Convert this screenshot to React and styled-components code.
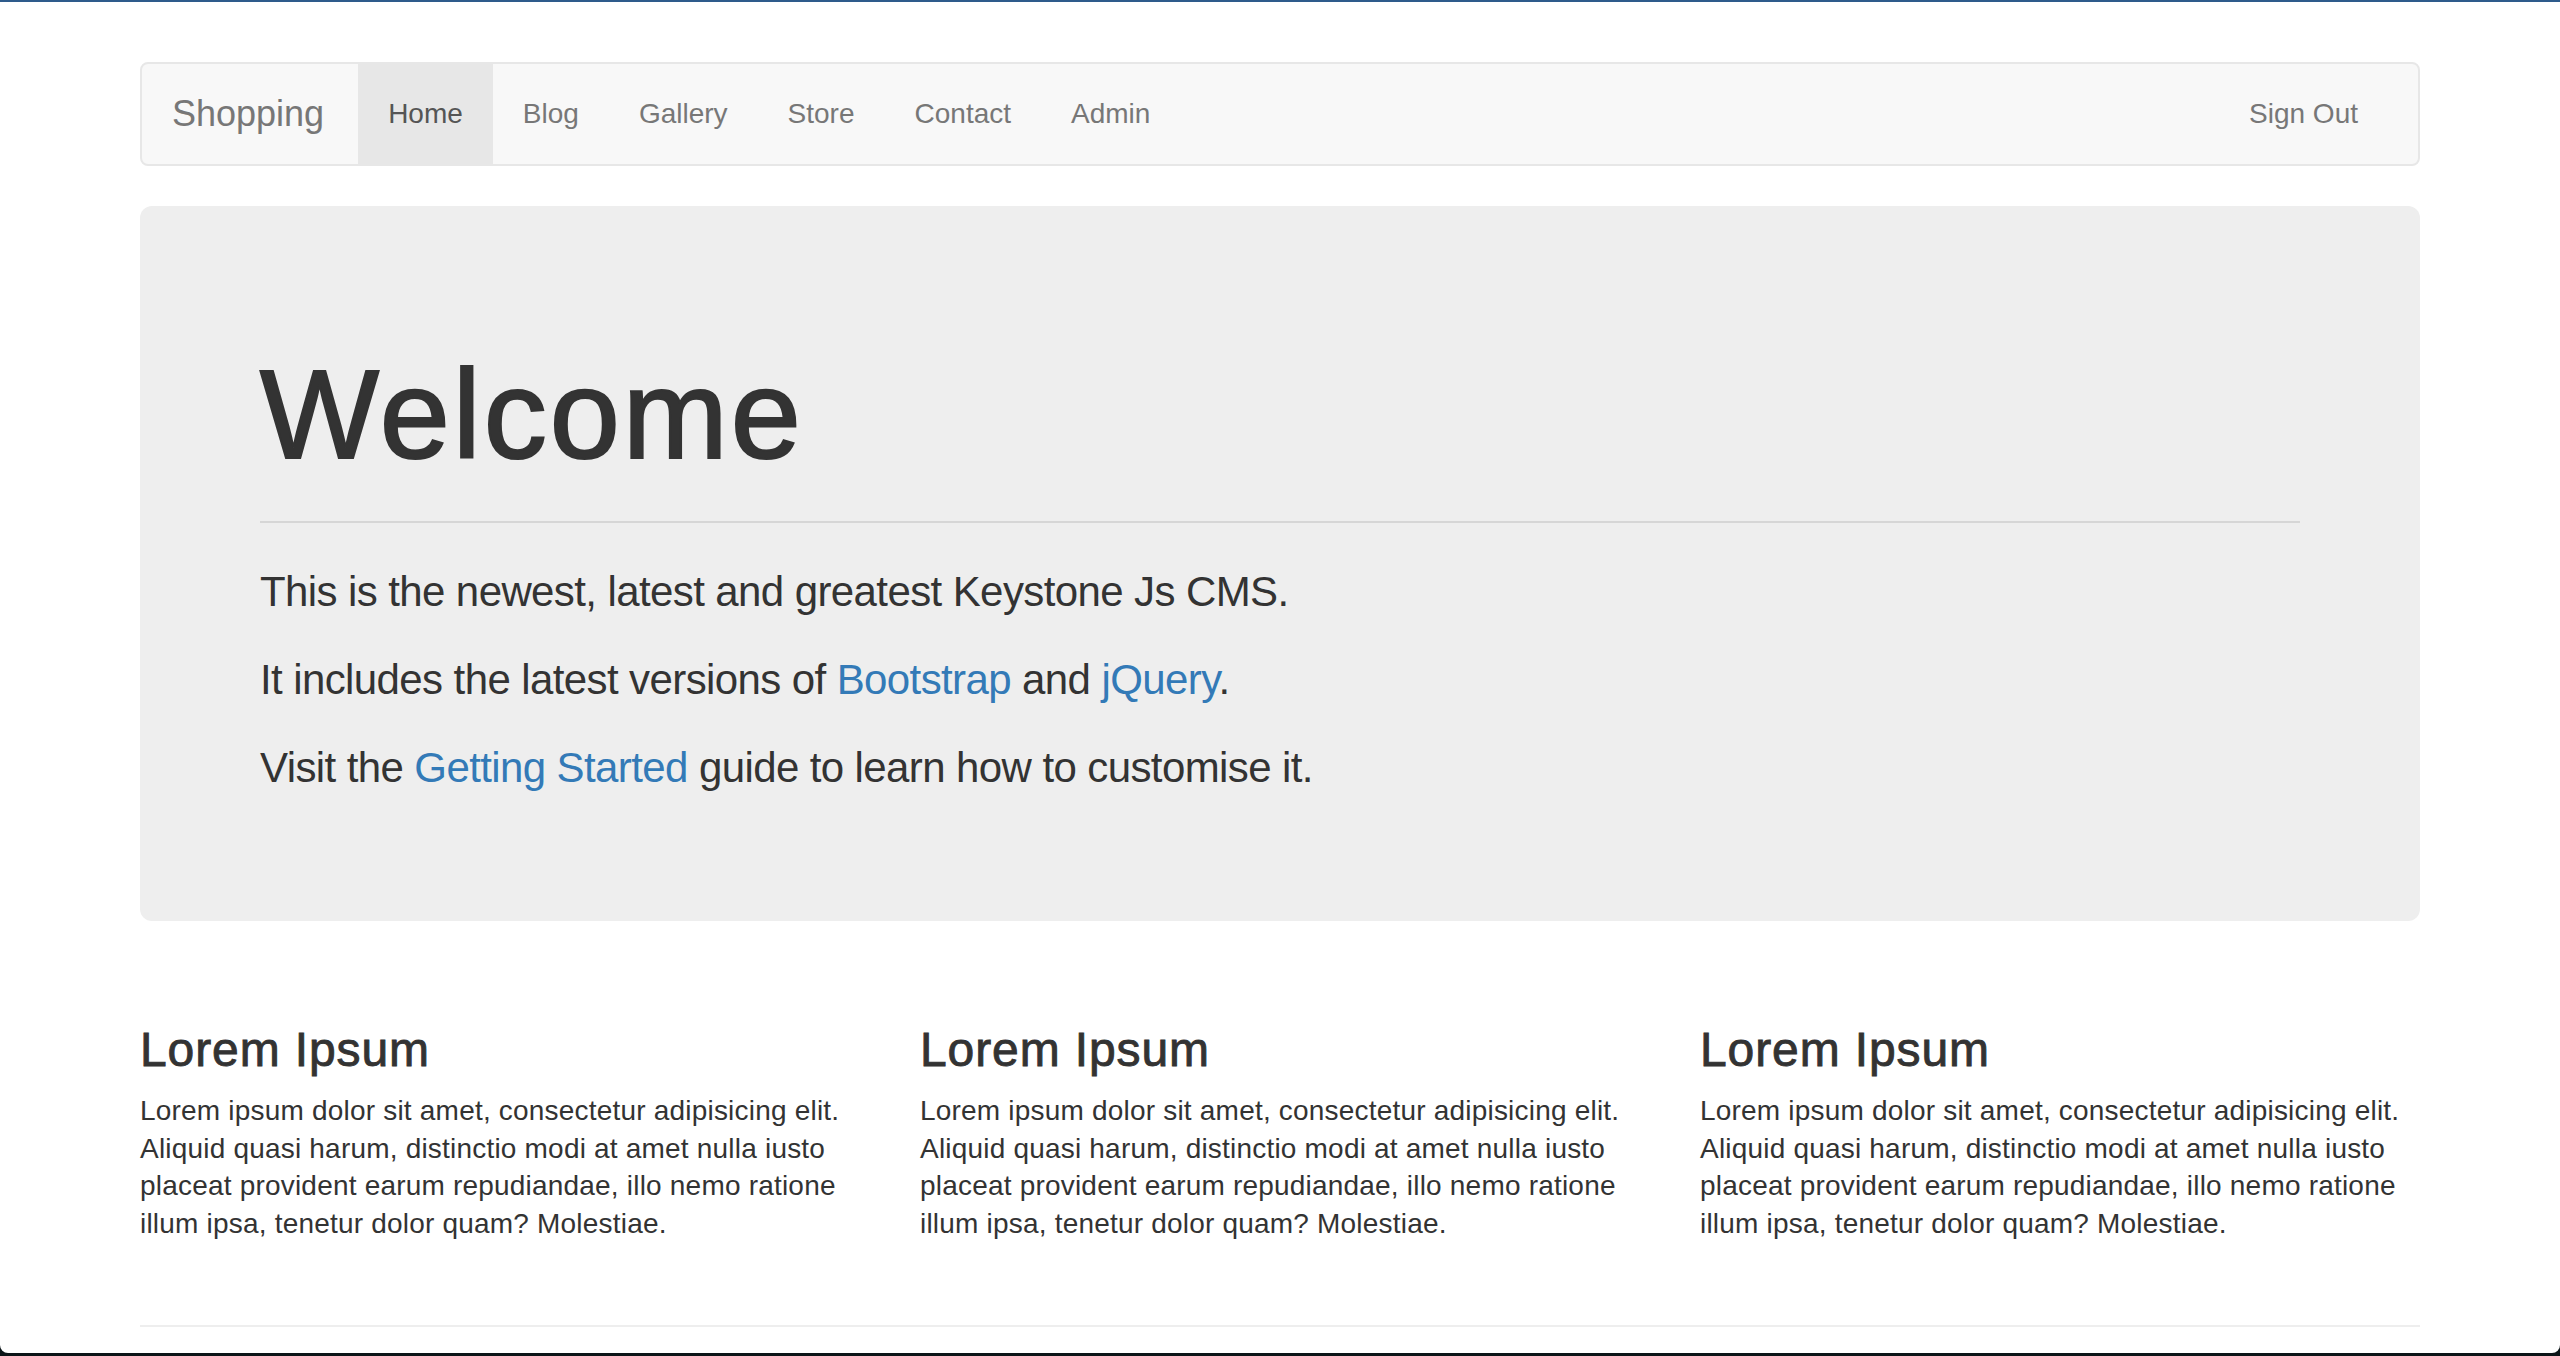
import React from "react";
import styled, { createGlobalStyle } from "styled-components";

const GlobalStyle = createGlobalStyle`
	html,
	body {
		margin: 0;
		padding: 0;
		background: #0c1518;
	}
	body {
		font-family: "Liberation Sans", Helvetica, Arial, sans-serif;
		color: #333;
	}
	* {
		box-sizing: border-box;
	}
`;

const navItems = ["Home", "Blog", "Gallery", "Store", "Contact", "Admin"];

const columns = [1, 2, 3];

const loremText =
	"Lorem ipsum dolor sit amet, consectetur adipisicing elit. Aliquid quasi harum, distinctio modi at amet nulla iusto placeat provident earum repudiandae, illo nemo ratione illum ipsa, tenetur dolor quam? Molestiae.";

function App() {
	return (
		<>
			<GlobalStyle />
			<Window>
				<Container>
					<Navbar>
						<Brand href="#">Shopping</Brand>
						<NavList>
							{navItems.map((item) => (
								<li key={item}>
									<NavLink href="#" $active={item === "Home"}>
										{item}
									</NavLink>
								</li>
							))}
						</NavList>
						<NavRight>
							<li>
								<NavLink href="#">Sign Out</NavLink>
							</li>
						</NavRight>
					</Navbar>

					<Jumbotron>
						<Title>Welcome</Title>
						<Rule $color="#d6d6d6" $top={36} $bottom={40} />
						<Lead>
							This is the newest, latest and greatest Keystone Js
							CMS.
						</Lead>
						<Lead>
							It includes the latest versions of{" "}
							<TextLink href="#">Bootstrap</TextLink> and{" "}
							<TextLink href="#">jQuery</TextLink>.
						</Lead>
						<Lead>
							Visit the <TextLink href="#">Getting Started</TextLink>{" "}
							guide to learn how to customise it.
						</Lead>
					</Jumbotron>

					<Row>
						{columns.map((col) => (
							<Column key={col}>
								<ColumnTitle>Lorem Ipsum</ColumnTitle>
								<ColumnText>{loremText}</ColumnText>
							</Column>
						))}
					</Row>

					<Rule $color="#eeeeee" $top={83} $bottom={0} />
				</Container>
			</Window>
		</>
	);
}

export default App;

const Window = styled.div`
	height: 1353px;
	background: #fff;
	border-top: 2px solid #2e5b8b;
	border-radius: 0 0 8px 8px;
	overflow: hidden;
`;

const Container = styled.div`
	width: 2280px;
	margin: 0 auto;
	padding-top: 60px;
`;

const Navbar = styled.nav`
	display: flex;
	align-items: stretch;
	height: 104px;
	margin-bottom: 40px;
	background-color: #f8f8f8;
	border: 2px solid #e7e7e7;
	border-radius: 8px;
`;

const Brand = styled.a`
	padding: 30px 34px 30px 30px;
	font-size: 36px;
	line-height: 40px;
	color: #777;
	text-decoration: none;
`;

const NavList = styled.ul`
	display: flex;
	margin: 0;
	padding: 0;
	list-style: none;
`;

const NavRight = styled(NavList)`
	margin-left: auto;
	margin-right: 30px;
`;

const NavLink = styled.a`
	display: block;
	padding: 30px;
	font-size: 28px;
	line-height: 40px;
	text-decoration: none;
	color: ${(p) => (p.$active ? "#555" : "#777")};
	background-color: ${(p) => (p.$active ? "#e7e7e7" : "transparent")};
`;

const Jumbotron = styled.section`
	padding: 96px 120px 94px;
	margin-bottom: 60px;
	background-color: #eee;
	border-radius: 12px;
`;

const Title = styled.h1`
	margin: 44px 0 0;
	font-size: 126px;
	line-height: 1.1;
	font-weight: 500;
	letter-spacing: 3px;
	-webkit-text-stroke: 2.2px #333;
	color: #333;
`;

const Rule = styled.hr`
	margin: ${(p) => p.$top}px 0 ${(p) => p.$bottom}px;
	border: 0;
	border-top: 2px solid ${(p) => p.$color};
`;

const Lead = styled.p`
	margin: 0 0 30px;
	font-size: 42px;
	line-height: 58px;
	font-weight: 300;
	letter-spacing: -0.6px;
	color: #333;
`;

const TextLink = styled.a`
	color: #337ab7;
	text-decoration: none;
`;

const Row = styled.div`
	display: grid;
	grid-template-columns: repeat(3, 1fr);
	column-gap: 60px;
`;

const Column = styled.div``;

const ColumnTitle = styled.h3`
	margin: 43px 0 16px;
	font-size: 48px;
	line-height: 1.1;
	font-weight: 500;
	letter-spacing: 0.9px;
	-webkit-text-stroke: 0.9px #333;
	color: #333;
`;

const ColumnText = styled.p`
	margin: 0;
	font-size: 28px;
	line-height: 37.5px;
	letter-spacing: 0.2px;
	color: #333;
`;
